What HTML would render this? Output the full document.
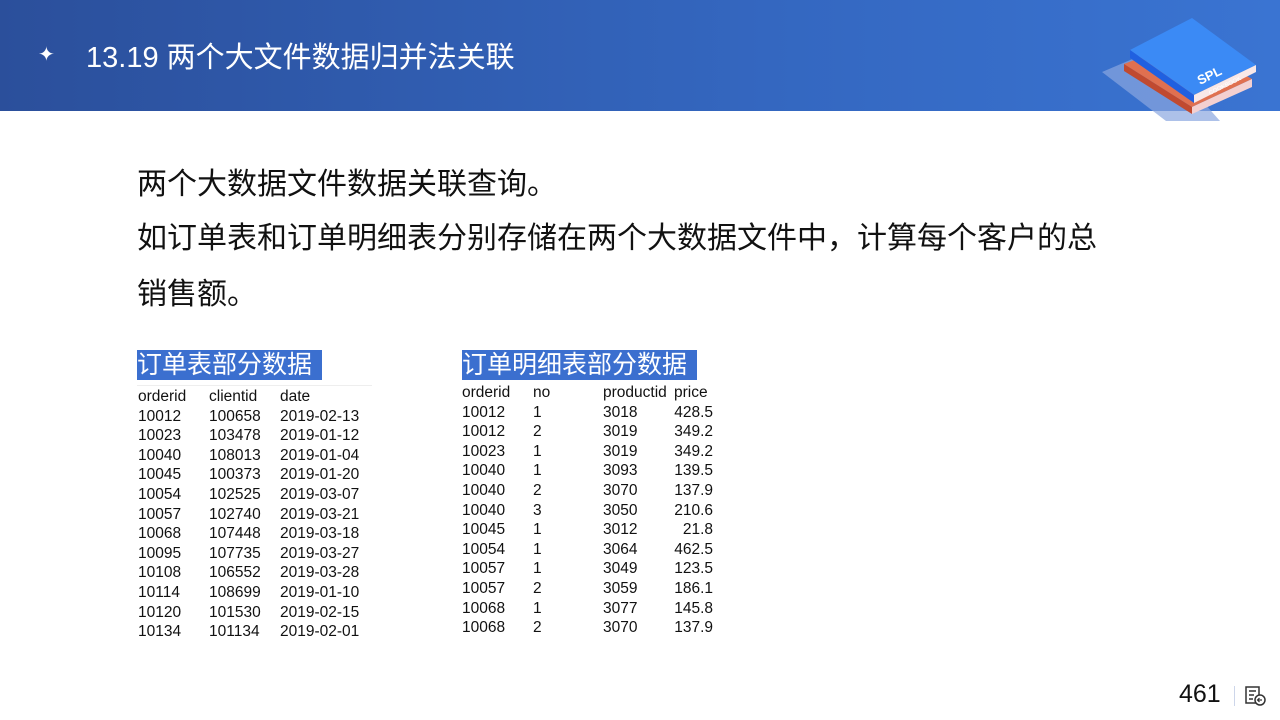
<!DOCTYPE html><html><head><meta charset="utf-8"><style>
body{margin:0;width:1280px;height:720px;position:relative;background:#fff;font-family:"Liberation Sans","Noto Sans CJK SC",sans-serif;overflow:hidden}
.hd{position:absolute;left:0;top:0;width:1280px;height:111px;background:linear-gradient(90deg,#2b4f9b,#3467c0 60%,#3a74d2)}
.t{position:absolute;left:86px;top:34px;color:#fff;font-size:29px;white-space:nowrap}
.star{position:absolute;left:38px;top:42px;color:#fff;font-size:20px}
.p{position:absolute;left:137px;font-size:30px;color:#111;white-space:nowrap}
.lab{position:absolute;background:#3b6fcf;color:#fff;font-size:25px;height:30px;line-height:30px;padding-right:10px}
.tb{position:absolute;font-size:15.5px;color:#111;line-height:19.6px}
.tb div{white-space:nowrap;height:19.6px;position:relative}
.tb span{position:absolute}
</style></head><body>
<div class="hd"></div>
<div class="star">✦</div>
<div class="t">13.19 两个大文件数据归并法关联</div>
<svg style="position:absolute;left:1100px;top:15px" width="160" height="110" viewBox="0 0 160 110">
<polygon points="2,57 56,34 120,106 66,106" fill="#8aa6e0" opacity=".7"/>
<polygon points="24,49 84,26 152,64 92,92" fill="#e07050"/>
<polygon points="24,49 24,56 92,99 92,92" fill="#c04a30"/>
<polygon points="92,92 152,64 152,72 92,99" fill="#f4d0d0"/>
<polygon points="30,35 92,3 156,50 94,80" fill="#3b8af5"/>
<polygon points="30,35 30,43 94,88 94,80" fill="#2060e0"/>
<polygon points="94,80 156,50 156,57 94,88" fill="#f8e8e8"/>
<text x="100" y="70" fill="#fff" font-size="13" font-weight="bold" transform="rotate(-26 100 70)" font-family="Liberation Sans">SPL</text>
<text x="110" y="80" fill="#fff" font-size="6" transform="rotate(-26 110 80)" font-family="Liberation Sans">COOKBOOK</text>
</svg>
<div class="p" style="top:159px">两个大数据文件数据关联查询。</div>
<div class="p" style="top:213px">如订单表和订单明细表分别存储在两个大数据文件中，计算每个客户的总</div>
<div class="p" style="top:269px">销售额。</div>
<div class="lab" style="left:137px;top:350px">订单表部分数据</div>
<div class="lab" style="left:462px;top:350px">订单明细表部分数据</div>
<div style="position:absolute;left:137px;top:385px;width:235px;border-top:1px solid #eee"></div>
<div class="tb" style="left:138px;top:387px;width:240px">
<div><span style="left:0">orderid</span><span style="left:71px">clientid</span><span style="left:142px">date</span></div>
<div><span>10012</span><span style="left:71px">100658</span><span style="left:142px">2019-02-13</span></div>
<div><span>10023</span><span style="left:71px">103478</span><span style="left:142px">2019-01-12</span></div>
<div><span>10040</span><span style="left:71px">108013</span><span style="left:142px">2019-01-04</span></div>
<div><span>10045</span><span style="left:71px">100373</span><span style="left:142px">2019-01-20</span></div>
<div><span>10054</span><span style="left:71px">102525</span><span style="left:142px">2019-03-07</span></div>
<div><span>10057</span><span style="left:71px">102740</span><span style="left:142px">2019-03-21</span></div>
<div><span>10068</span><span style="left:71px">107448</span><span style="left:142px">2019-03-18</span></div>
<div><span>10095</span><span style="left:71px">107735</span><span style="left:142px">2019-03-27</span></div>
<div><span>10108</span><span style="left:71px">106552</span><span style="left:142px">2019-03-28</span></div>
<div><span>10114</span><span style="left:71px">108699</span><span style="left:142px">2019-01-10</span></div>
<div><span>10120</span><span style="left:71px">101530</span><span style="left:142px">2019-02-15</span></div>
<div><span>10134</span><span style="left:71px">101134</span><span style="left:142px">2019-02-01</span></div>
</div>
<div class="tb" style="left:462px;top:383px;width:260px">
<div><span>orderid</span><span style="left:71px">no</span><span style="left:141px">productid</span><span style="left:212px">price</span></div>
<div><span>10012</span><span style="left:71px">1</span><span style="left:141px">3018</span><span style="right:9px">428.5</span></div>
<div><span>10012</span><span style="left:71px">2</span><span style="left:141px">3019</span><span style="right:9px">349.2</span></div>
<div><span>10023</span><span style="left:71px">1</span><span style="left:141px">3019</span><span style="right:9px">349.2</span></div>
<div><span>10040</span><span style="left:71px">1</span><span style="left:141px">3093</span><span style="right:9px">139.5</span></div>
<div><span>10040</span><span style="left:71px">2</span><span style="left:141px">3070</span><span style="right:9px">137.9</span></div>
<div><span>10040</span><span style="left:71px">3</span><span style="left:141px">3050</span><span style="right:9px">210.6</span></div>
<div><span>10045</span><span style="left:71px">1</span><span style="left:141px">3012</span><span style="right:9px">21.8</span></div>
<div><span>10054</span><span style="left:71px">1</span><span style="left:141px">3064</span><span style="right:9px">462.5</span></div>
<div><span>10057</span><span style="left:71px">1</span><span style="left:141px">3049</span><span style="right:9px">123.5</span></div>
<div><span>10057</span><span style="left:71px">2</span><span style="left:141px">3059</span><span style="right:9px">186.1</span></div>
<div><span>10068</span><span style="left:71px">1</span><span style="left:141px">3077</span><span style="right:9px">145.8</span></div>
<div><span>10068</span><span style="left:71px">2</span><span style="left:141px">3070</span><span style="right:9px">137.9</span></div>
</div>
<div style="position:absolute;left:1179px;top:680px;font-size:25px;color:#111">461</div>
<div style="position:absolute;left:1234px;top:686px;width:1px;height:20px;background:#cdd6ea"></div>
<svg style="position:absolute;left:1245px;top:686px" width="22" height="20" viewBox="0 0 22 20"><rect x="1" y="1" width="13" height="16" fill="none" stroke="#333" stroke-width="1.5"/><path d="M4 5h7M4 9h5M4 13h4" stroke="#333" stroke-width="1.5"/><circle cx="15" cy="14" r="5" fill="#fff" stroke="#333" stroke-width="1.5"/><path d="M17 14h-4M14.5 12l-2 2 2 2" stroke="#333" stroke-width="1.2" fill="none"/></svg>
</body></html>
